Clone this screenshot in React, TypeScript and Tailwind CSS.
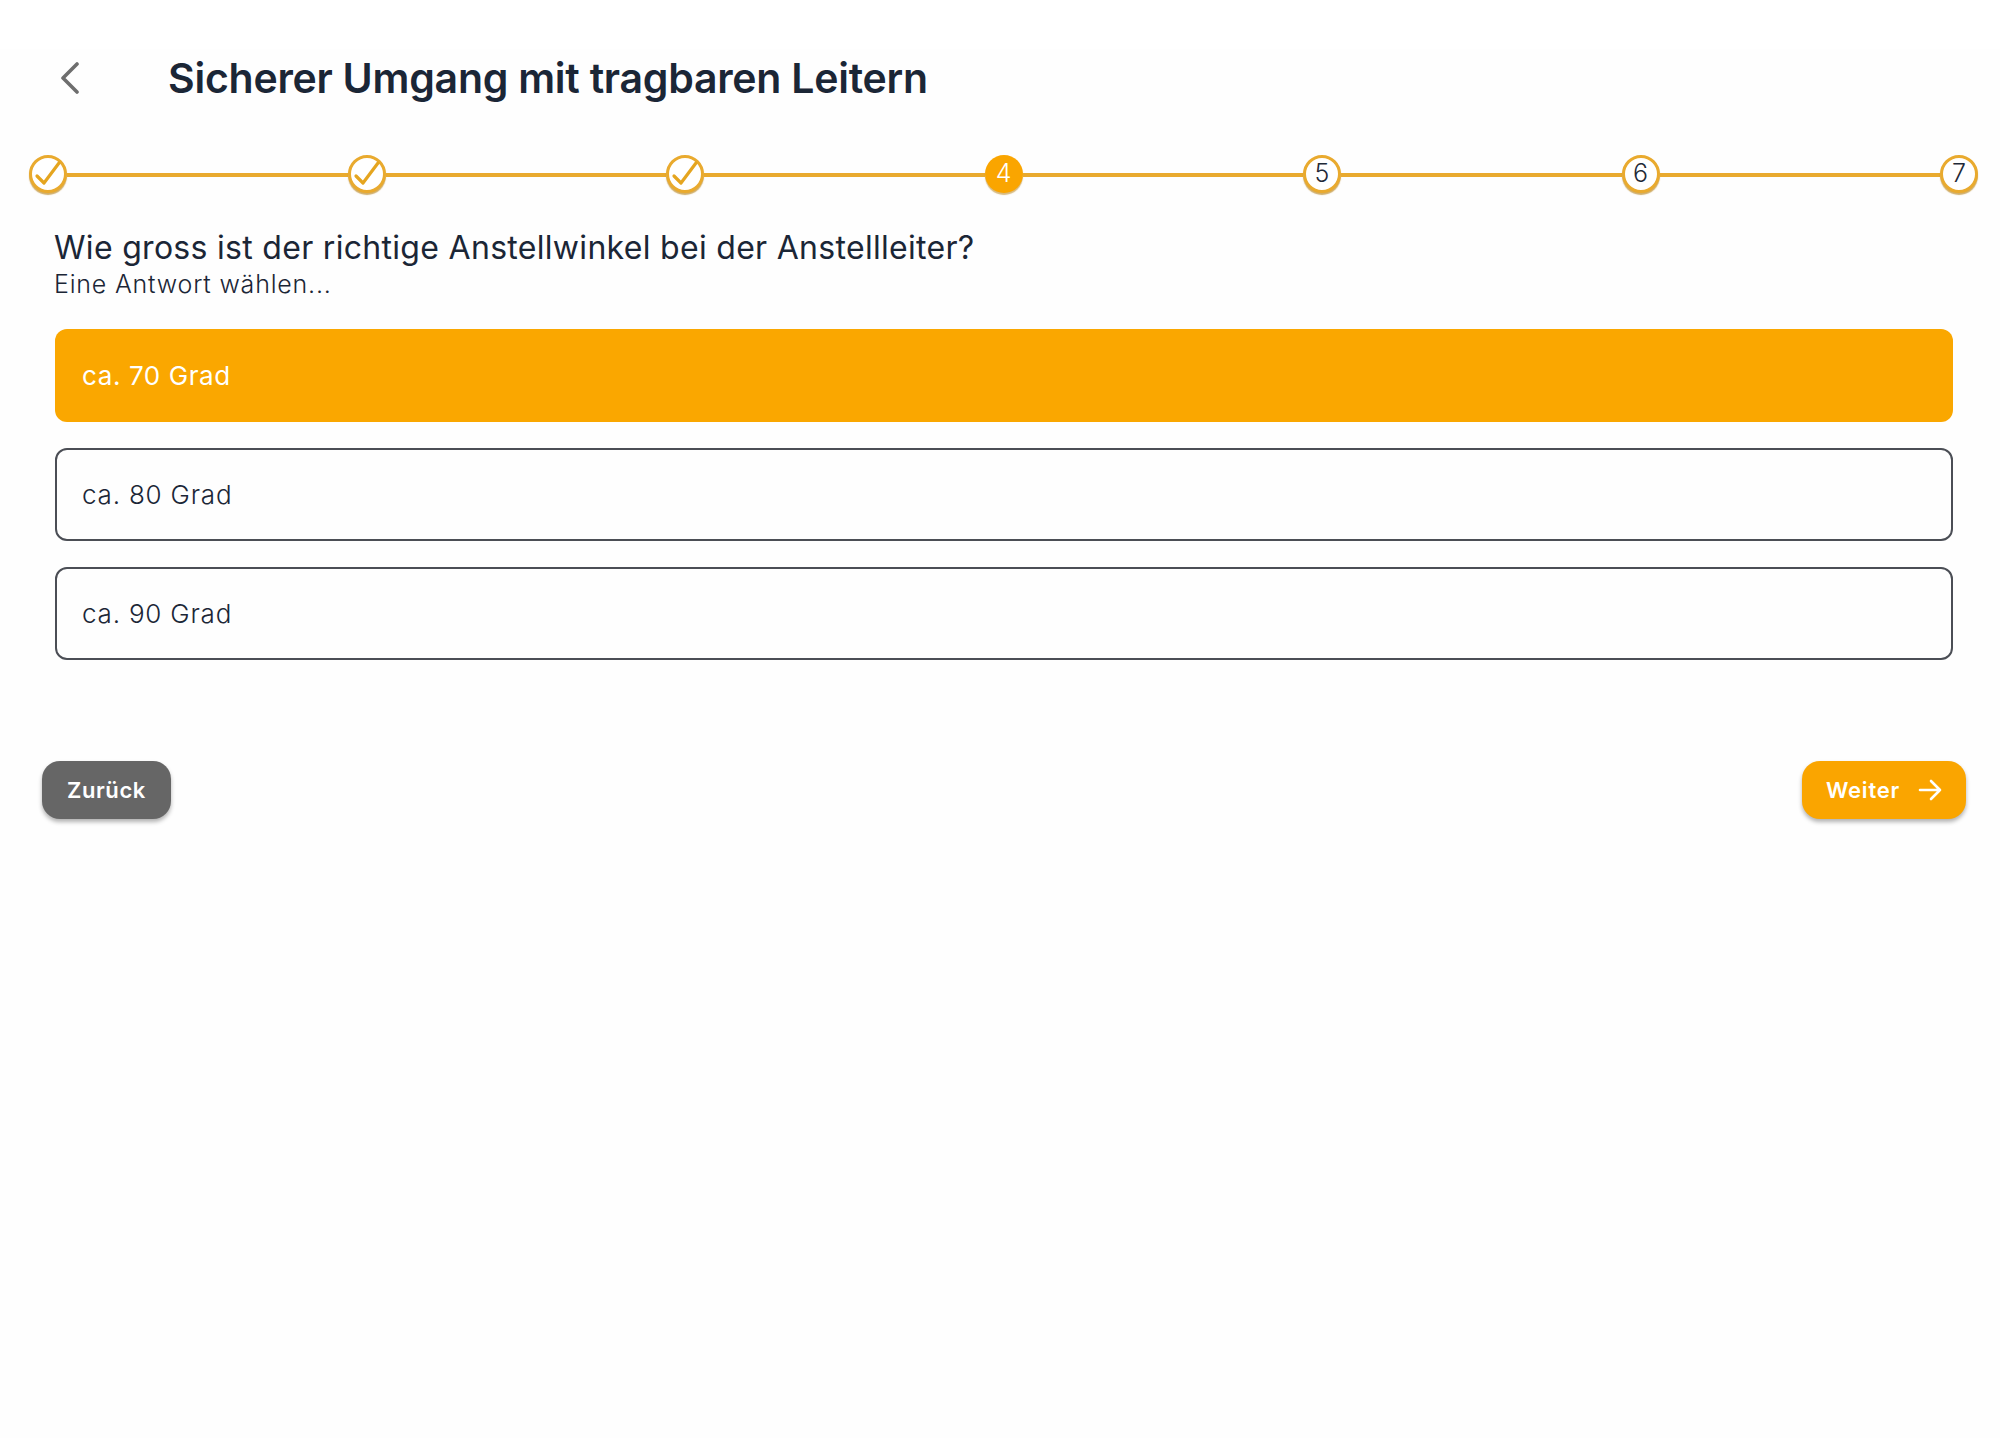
import React from "react";

function Circle({ n }: { n: number }) {
  if (n < 4) {
    return (
      <div className="w-[38px] h-[38px] shrink-0 rounded-full border-[3px] border-[#e9aa2e] bg-white shadow-[0_2px_1px_rgba(190,140,40,0.7)] flex items-center justify-center">
        <svg viewBox="0 0 38 38" className="w-[38px] h-[38px] shrink-0" fill="none" stroke="#e5a51f" strokeWidth="3.2" strokeLinecap="round" strokeLinejoin="round">
          <path d="M8 21l7 7L30 8" />
        </svg>
      </div>
    );
  }
  if (n === 4) {
    return (
      <div className="w-[38px] h-[38px] shrink-0 rounded-full bg-[#faa500] shadow-[0_2px_1px_rgba(190,140,40,0.6)] flex items-center justify-center text-white text-[25px] font-light font-['Inter',sans-serif]">
        4
      </div>
    );
  }
  return (
    <div className="w-[38px] h-[38px] shrink-0 rounded-full border-[3px] border-[#e9aa2e] bg-white shadow-[0_2px_1px_rgba(190,140,40,0.7)] flex items-center justify-center text-[#1f2937] text-[25px] font-light font-['Inter',sans-serif]">
      {n}
    </div>
  );
}

export default function App() {
  const steps = [1, 2, 3, 4, 5, 6, 7];
  return (
    <div className="min-h-[1438px] bg-[#fefefe] font-['Inter',sans-serif] text-[#1b2636]">
      <header className="flex items-center h-[58px] mt-[49px] pl-[60px]">
        <svg viewBox="0 0 19 32" className="w-[19px] h-[32px] shrink-0" fill="none" stroke="#6e6e6e" strokeWidth="3.6" strokeLinecap="round" strokeLinejoin="round">
          <path d="M17 2L3 16l14 14" />
        </svg>
        <h1 className="ml-[89px] -mt-[1px] text-[41px] leading-[58px] font-semibold tracking-[-0.25px]">Sicherer Umgang mit tragbaren Leitern</h1>
      </header>

      <div className="flex items-center mt-[48px] pl-[29px] pr-[22px]">
        {steps.map((n) => (
          <React.Fragment key={n}>
            <Circle n={n} />
            {n < 7 && <div className="flex-1 h-[4px] mt-[2px] bg-[#e9aa2e]" />}
          </React.Fragment>
        ))}
      </div>

      <div className="pl-[55px] pr-[47px] mt-[35px]">
        <h2 className="-ml-[1px] text-[32px] leading-[40px] font-normal tracking-[0.3px]">Wie gross ist der richtige Anstellwinkel bei der Anstellleiter?</h2>
        <p className="-ml-[1px] text-[25px] leading-[32px] font-light tracking-[0.8px] mt-[0px]">Eine Antwort wählen...</p>
        <div className="flex flex-col gap-[26px] mt-[29px]">
          <div className="h-[93px] rounded-[12px] bg-[#faa700] text-white pl-[27px] flex items-center text-[26px] tracking-[0.6px]">ca. 70 Grad</div>
          <div className="h-[93px] rounded-[12px] border-2 border-[#4b4e55] pl-[25px] flex items-center text-[26px] font-light tracking-[0.8px]">ca. 80 Grad</div>
          <div className="h-[93px] rounded-[12px] border-2 border-[#4b4e55] pl-[25px] flex items-center text-[26px] font-light tracking-[0.8px]">ca. 90 Grad</div>
        </div>
      </div>

      <div className="flex justify-between items-center pl-[42px] pr-[34px] mt-[101px]">
        <button className="h-[58px] w-[129px] rounded-[18px] bg-[#666666] text-white text-[22px] font-semibold tracking-[0.6px] shadow-[0_3px_4px_rgba(0,0,0,0.3)] flex items-center justify-center">Zurück</button>
        <button className="h-[58px] w-[164px] rounded-[18px] bg-[#faa500] text-white text-[22px] font-semibold tracking-[0.8px] shadow-[0_3px_4px_rgba(0,0,0,0.3)] flex items-center justify-center gap-[18px]">
          Weiter
          <svg viewBox="0 0 24 24" className="w-[24px] h-[24px]" fill="none" stroke="currentColor" strokeWidth="2.6" strokeLinecap="round" strokeLinejoin="round">
            <path d="M2 12h20M13 3l9 9-9 9" />
          </svg>
        </button>
      </div>
    </div>
  );
}
